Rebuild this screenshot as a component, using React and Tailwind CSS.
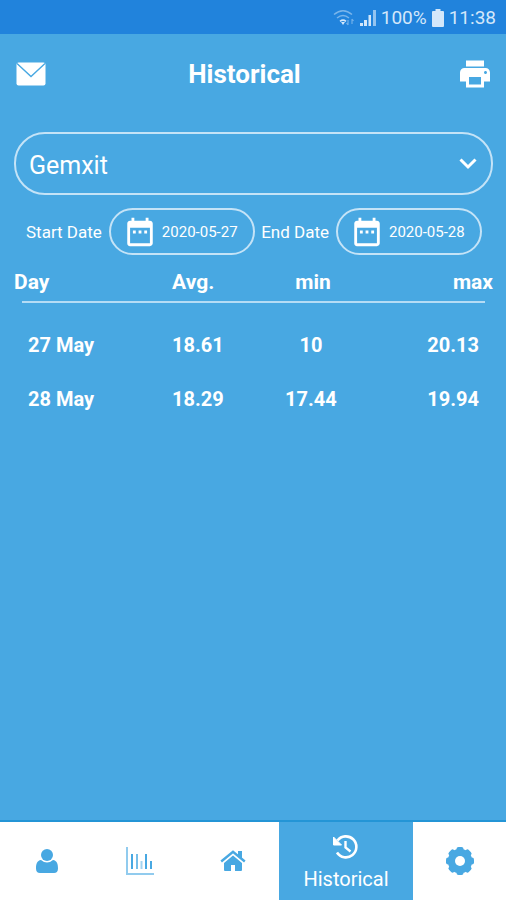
import { useState } from 'react';
import { MdDateRange, MdPrint } from 'react-icons/md';

const ROWS = [
  { day: '27 May', avg: '18.61', min: '10', max: '20.13' },
  { day: '28 May', avg: '18.29', min: '17.44', max: '19.94' },
];

function StatusBar() {
  return (
    <div className="flex h-[34px] items-center justify-end bg-[#2183dc] pr-[10px] pt-[2px] text-[19px] text-[#d3e7fa]">
      <svg viewBox="0 0 24 18" className="mr-[2px] h-[18px] w-6" fill="none" stroke="currentColor" strokeWidth="1.6" aria-hidden="true">
        <path d="M1 5.5Q10 -2 19 5.5M4 9Q10 4 16 9" opacity=".5" />
        <path d="M7 12.3Q10 9.8 13 12.3" />
        <path d="M8 13h4l-2 3z" fill="currentColor" stroke="none" />
        <path d="M15 11v5M13.5 14l1.5 2M19 15v-5M19 10l1.5 2" strokeWidth="1.2" opacity=".45" />
      </svg>
      <svg viewBox="0 0 18 18" className="mr-[4px] h-[18px] w-[18px]" fill="currentColor" aria-hidden="true">
        <path d="M1 14h3v3H1zM5 11h3v6H5zM9.500 6h2.500v11H9.500z" />
        <path d="M14 1h3v16h-3z" opacity=".65" />
      </svg>
      <span>100%</span>
      <svg viewBox="0 0 12 18" className="ml-[5px] mr-[5px] h-[18px] w-3" fill="currentColor" aria-hidden="true">
        <path d="M3.500 0h5v2H11q1 0 1 1v14q0 1-1 1H1q-1 0-1-1V3q0-1 1-1h2.500z" />
      </svg>
      <span>11:38</span>
    </div>
  );
}

function MailIcon() {
  return (
    <svg viewBox="0 0 30 24" className="h-6 w-[30px]" aria-hidden="true">
      <rect x="0.500" y="0.500" width="29" height="23" rx="2" fill="#fff" />
      <path d="M1 1.500 15 14.500 29 1.500" fill="none" stroke="#48a8e2" strokeWidth="1.400" />
    </svg>
  );
}

function UserIcon() {
  return (
    <svg viewBox="0 0 22 24" className="h-6 w-[22px]" fill="currentColor" aria-hidden="true">
      <circle cx="11" cy="6" r="6" />
      <path d="M5 11q6 5 12 0c4 .5 5 4 5 8.500 0 3-1.500 4.500-4 4.500H4c-2.500 0-4-1.500-4-4.500C0 15 1 11.500 5 11z" />
    </svg>
  );
}

function ChartIcon() {
  return (
    <svg viewBox="0 0 28 28" className="h-7 w-7" fill="none" stroke="currentColor" strokeWidth="2" aria-hidden="true">
      <path d="M1 0v27h27" opacity=".6" />
      <path d="M6 7v15M20 7v15M25 14v8" />
      <path d="M11 7v15" opacity=".75" />
      <path d="M15.500 14v8" opacity=".5" />
    </svg>
  );
}

function HomeIcon() {
  return (
    <svg viewBox="0 0 26 22" className="h-[22px] w-[26px]" fill="currentColor" aria-hidden="true">
      <path d="M13 5.500 4 13V20q0 1 1 1h6v-6h4v6h6q1 0 1-1v-7z" />
      <path d="M1.200 11.500 13 1.800 24.800 11.500" fill="none" stroke="currentColor" strokeWidth="2.400" />
      <path d="M18 1h4v8l-4-3.500z" />
    </svg>
  );
}

function HistoryIcon() {
  return (
    <svg viewBox="0 0 26 26" className="h-[26px] w-[26px]" fill="none" stroke="currentColor" strokeWidth="2.600" aria-hidden="true">
      <path d="M4.500 6.500A10.500 10.500 0 1 1 4 18.500" />
      <path d="M12.500 7v6.500l5 4" strokeWidth="2.400" />
      <path d="M.500 3v8h8z" fill="currentColor" stroke="currentColor" strokeWidth="1" strokeLinejoin="round" />
    </svg>
  );
}

function GearIcon() {
  return (
    <svg viewBox="-14 -14 28 28" className="h-7 w-7" aria-hidden="true">
      <g fill="currentColor">
        <circle r="12.200" />
        <rect x="-3.500" y="-14" width="7" height="28" rx="2" />
        <rect x="-3.500" y="-14" width="7" height="28" rx="2" transform="rotate(45)" />
        <rect x="-3.500" y="-14" width="7" height="28" rx="2" transform="rotate(90)" />
        <rect x="-3.500" y="-14" width="7" height="28" rx="2" transform="rotate(135)" />
      </g>
      <circle r="5" fill="#fff" />
    </svg>
  );
}

function DateField({ id, label, value, onChange }) {
  return (
    <div className="flex items-center gap-[7px]">
      <label htmlFor={id} className="whitespace-nowrap pt-[2px] text-[17px]">{label}</label>
      <div className="flex h-[47px] w-[146px] items-center gap-[5px] rounded-full border-2 border-[#c4e3f7] pl-3">
        <MdDateRange size={34} className="shrink-0" />
        <input id={id} type="text" value={value} onChange={(e) => onChange(e.target.value)}
          className="w-full min-w-0 bg-transparent pt-[2px] text-[15px] outline-none" />
      </div>
    </div>
  );
}

const TAB = 'flex flex-[93] items-center justify-center bg-white text-[#48a8e2]';

export default function App() {
  const [product, setProduct] = useState('Gemxit');
  const [start, setStart] = useState('2020-05-27');
  const [end, setEnd] = useState('2020-05-28');

  return (
    <div className="flex min-h-screen flex-col bg-[#48a8e2] font-[Roboto,sans-serif] text-white">
      <StatusBar />

      <header className="flex h-20 items-center justify-between pl-4 pr-[13px]">
        <button type="button" aria-label="Messages"><MailIcon /></button>
        <h1 className="pr-[14px] text-[26px] font-bold">Historical</h1>
        <button type="button" aria-label="Print"><MdPrint size={36} /></button>
      </header>

      <main className="flex-1 pl-[14px] pr-[13px] pt-[18px]">
        {/* Product picker */}
        <div className="grid items-center">
          <select aria-label="Product" value={product} onChange={(e) => setProduct(e.target.value)}
            className="col-start-1 row-start-1 h-[63px] w-full appearance-none rounded-[31px] border-2 border-[#c4e3f7] bg-transparent px-[13px] pt-1 text-[25px] outline-none">
            <option>Gemxit</option>
          </select>
          <svg viewBox="0 0 18 12" className="pointer-events-none col-start-1 row-start-1 mr-4 h-3 w-[18px] justify-self-end" fill="none" stroke="currentColor" strokeWidth="3" aria-hidden="true">
            <path d="M1.500 1.500 9 9l7.500-7.500" />
          </svg>
        </div>

        {/* Date range */}
        <div className="mt-[13px] flex items-center justify-between pl-3 pr-[11px]">
          <DateField id="start" label="Start Date" value={start} onChange={setStart} />
          <DateField id="end" label="End Date" value={end} onChange={setEnd} />
        </div>

        <table className="mt-[10px] w-full table-fixed text-[20px] font-bold">
          <thead>
            <tr className="h-9 text-[21px]">
              <th className="w-[33%] text-left">Day</th>
              <th className="w-[17%] text-left">Avg.</th>
              <th className="w-[24%] pl-1 text-center">min</th>
              <th className="w-[26%] text-right">max</th>
            </tr>
          </thead>
          <tbody>
            <tr>
              <td colSpan={4} className="px-2 pb-[15px]"><hr className="border-t-2 border-[#b5dcf5]" /></td>
            </tr>
            {ROWS.map((r) => (
              <tr key={r.day} className="h-[54px]">
                <td className="pl-[14px]">{r.day}</td>
                <td>{r.avg}</td>
                <td className="text-center">{r.min}</td>
                <td className="pr-[14px] text-right">{r.max}</td>
              </tr>
            ))}
          </tbody>
        </table>
      </main>

      <nav className="flex h-20 border-t-2 border-[#2495d6]">
        <button type="button" aria-label="Profile" className={TAB}><UserIcon /></button>
        <button type="button" aria-label="Charts" className={TAB}><ChartIcon /></button>
        <button type="button" aria-label="Home" className={TAB}><HomeIcon /></button>
        <button type="button" aria-current="page" className="flex flex-[134] flex-col items-center justify-center gap-1 bg-[#48a8e2] pt-[6px] text-[20px]">
          <HistoryIcon />
          Historical
        </button>
        <button type="button" aria-label="Settings" className={TAB}><GearIcon /></button>
      </nav>
    </div>
  );
}
